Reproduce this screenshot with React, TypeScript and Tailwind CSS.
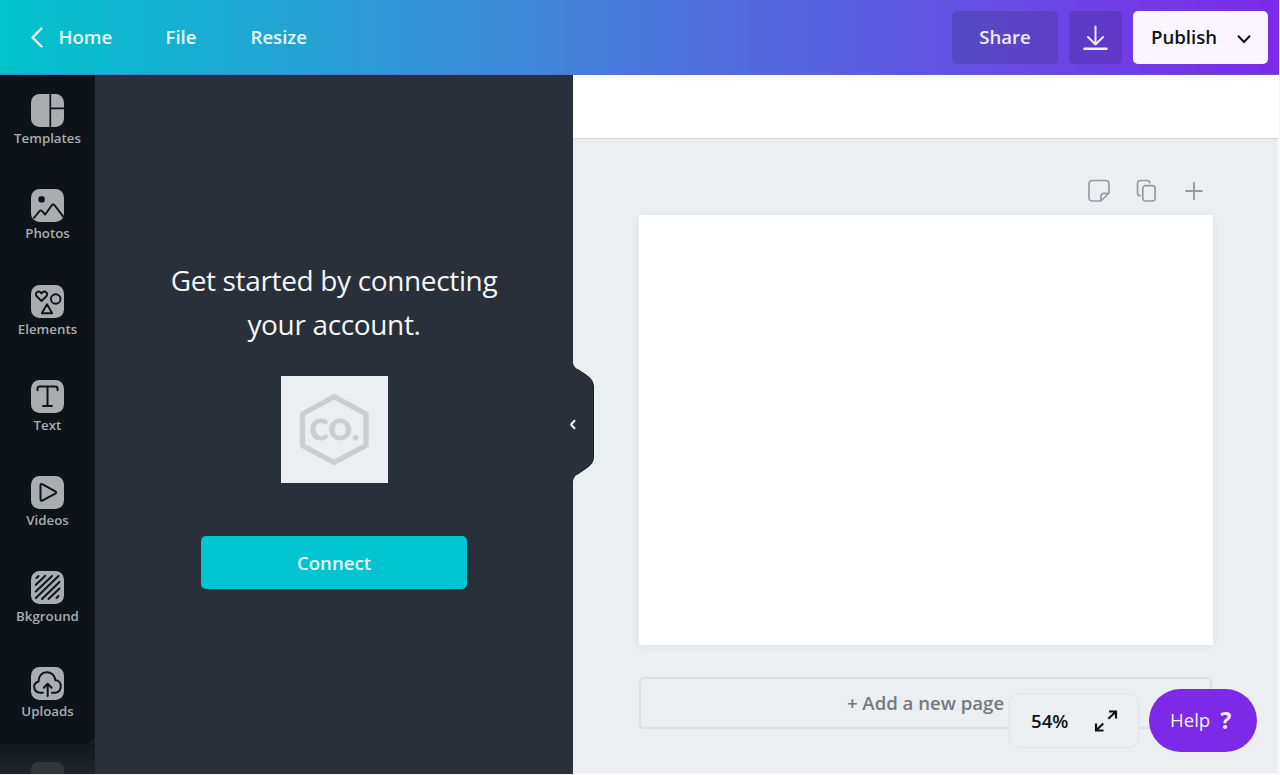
import type { ReactNode } from "react";

const DARK = "#0e1319";

function TemplatesGlyph() {
  return <path d="M19.3 0v33M19.3 14.3H33" fill="none" stroke={DARK} strokeWidth="1.7" />;
}

function PhotosGlyph() {
  return (
    <>
      <rect x="7.5" y="7.3" width="6.2" height="6.2" rx="2" fill={DARK} />
      <path d="M2.500 29.500l6-7.400q1.300-1.500 2.600 0l3.100 3.400 6.400-9q1.600-2 3.200 0L32.500 28" fill="none" stroke={DARK} strokeWidth="1.900" strokeLinejoin="round" />
    </>
  );
}

function ElementsGlyph() {
  return (
    <g fill="none" stroke={DARK} strokeWidth="1.9" strokeLinejoin="round">
      <path d="M10.500 16l-4.600-4.500C2.800 8 7.500 4.500 10.500 8.300 13.500 4.500 18.200 8 15.100 11.500z" />
      <circle cx="24.700" cy="14" r="4.800" />
      <path d="M16 19.300l5.200 9H10.800z" />
    </g>
  );
}

function TextGlyph() {
  return (
    <path
      d="M6.500 10.300V8.500q0-1.900 2-1.900h16q2 0 2 1.900v1.800M16.500 7v19M12 26h9"
      fill="none"
      stroke={DARK}
      strokeWidth="2"
      strokeLinecap="round"
    />
  );
}

function VideosGlyph() {
  return (
    <path
      d="M9.500 9.500v13.600q0 2.300 2.200 1.200l12.600-6.600q1.700-1.200 0-2.400L11.700 8.300q-2.200-1.100-2.200 1.200z"
      fill="none"
      stroke={DARK}
      strokeWidth="2"
      strokeLinejoin="round"
    />
  );
}

function BackgroundGlyph() {
  return (
    <path
      d="M5.500 7l2-2M4.800 13.800L14.300 4.800M4.800 20.500L21 5M4.800 27L27.500 5M11 28L28.500 11M17.500 28L28.500 17.500M25.500 27l2-2"
      fill="none"
      stroke={DARK}
      strokeWidth="2"
      strokeLinecap="round"
    />
  );
}

function UploadsGlyph() {
  return (
    <g fill="none" stroke={DARK} strokeWidth="2" strokeLinecap="round" strokeLinejoin="round">
      <path d="M12 25.800H9.300C1.500 25 1.500 16 7.500 14.500 7.500 2.500 23 2 24.500 13.300 31.500 13.500 31.500 25 24.500 25.800H21" />
      <path d="M16.700 29V17M12.800 20.800l3.900-4 3.900 4" />
    </g>
  );
}

const tools: { label: string; glyph: ReactNode }[] = [
  { label: "Templates", glyph: <TemplatesGlyph /> },
  { label: "Photos", glyph: <PhotosGlyph /> },
  { label: "Elements", glyph: <ElementsGlyph /> },
  { label: "Text", glyph: <TextGlyph /> },
  { label: "Videos", glyph: <VideosGlyph /> },
  { label: "Bkground", glyph: <BackgroundGlyph /> },
  { label: "Uploads", glyph: <UploadsGlyph /> },
];

function Header() {
  return (
    <header className="flex h-[75px] shrink-0 items-start justify-between border-b border-[#4c70c8]/60 bg-[linear-gradient(90deg,#00c4cc,#3f8ad9_40%,#4a78dc_50%,#5f59e2_70%,#7d2ae8)] pr-[11px] pl-[29px] text-[18.600px] font-semibold text-white/90">
      <nav className="flex h-[73px] items-center">
        <a className="flex items-center gap-[14.500px]">
          <svg width="15" height="22" viewBox="0 0 15 22" className="translate-y-px" fill="none" stroke="currentColor" strokeWidth="2.400" strokeLinecap="round" strokeLinejoin="round">
            <path d="M12.500 2.500L3.500 11.500l9 9" />
          </svg>
          <span className="w-[107px]">Home</span>
        </a>
        <a className="w-[85px]">File</a>
        <a>Resize</a>
      </nav>
      <div className="flex gap-[11px] pt-[11px]">
        <button className="h-[53px] w-[106px] rounded-[5px] bg-[#3a3580]/30 pb-[2px]">Share</button>
        <button className="flex h-[53px] w-[53px] items-center justify-center rounded-[5px] bg-[#3a2a80]/30">
          <svg width="26" height="26" viewBox="0 0 26 26" className="-translate-x-px" fill="none" stroke="currentColor" strokeWidth="2" strokeLinecap="round" strokeLinejoin="round">
            <path d="M13.500 1.500v18M6 12l7.500 7.500 7.500-7.500" />
            <path d="M2.500 23.700h22" strokeWidth="2.500" />
          </svg>
        </button>
        <button className="flex h-[53px] w-[135px] items-center justify-between rounded-[5px] bg-[#faf5fe] pr-[16px] pb-[2px] pl-[18px] text-[#0e1318]">
          Publish
          <svg width="16" height="10" viewBox="0 0 16 10" className="translate-y-[2px]" fill="none" stroke="currentColor" strokeWidth="2" strokeLinecap="round" strokeLinejoin="round">
            <path d="M2.500 2.300L8 8l5.500-5.700" />
          </svg>
        </button>
      </div>
    </header>
  );
}

function Sidebar() {
  return (
    <aside className="flex w-[95px] shrink-0 flex-col overflow-hidden bg-[#20252e]">
      <div className="shrink-0 bg-[#1a1f27]">
        <div className="flex h-[669px] flex-col rounded-br-[10px] bg-[#0e1319] pt-[18.500px]">
          {tools.map((tool) => (
            <div key={tool.label} className="flex h-[95.600px] shrink-0 flex-col items-center">
              <svg width="33" height="33" viewBox="0 0 33 33" className="shrink-0">
                <rect width="33" height="33" rx="8.500" fill="#a9adb0" />
                {tool.glyph}
              </svg>
              <span className="mt-[1.400px] text-[13.300px] leading-5 font-semibold text-[#a9adb0]">{tool.label}</span>
            </div>
          ))}
        </div>
      </div>
      <div className="flex h-[30px] shrink-0 justify-center bg-linear-to-b from-[#14191f] to-[#20252e] pt-[18px]">
        <div className="h-3 w-[33px] rounded-t-[7px] bg-[#323638]" />
      </div>
    </aside>
  );
}

function ConnectPanel() {
  return (
    <section className="relative flex w-[478px] shrink-0 flex-col items-center bg-[#293039] pt-[183px]">
      <h1 className="text-center text-[28px] leading-[44px] tracking-[-0.350px] text-[#f5f6f7]">
        Get started by connecting
        <br />
        your account.
      </h1>
      <svg width="107" height="107" viewBox="0 0 107 107" className="mt-[30px]">
        <rect width="107" height="107" fill="#ebeff2" />
        <path d="M53 20.700L85 38v31.500L53 86.500 21.500 69.500V38z" fill="none" stroke="#caced0" strokeWidth="5.300" strokeLinejoin="round" />
        <text x="28.800" y="64" fontFamily="Lato" fontWeight="900" fontSize="28" fill="#caced0" stroke="#caced0" strokeWidth=".9" textLength="49">
          CO.
        </text>
      </svg>
      <button className="mt-[53px] h-[53px] w-[266px] rounded-[5px] bg-[#00c4cf] text-[18.600px] font-semibold text-white/90">Connect</button>
      <svg width="24" height="124" viewBox="0 0 24 124" className="absolute top-[286px] left-[476px] z-10">
        <path d="M0 0H1.700C2 4 3.500 6 6 8L15.500 14.300Q22.500 19 22.500 26V96Q22.500 102.500 15.500 107L6 113.500C3.500 115.500 2 118 1.700 122H0z" fill="#293039" />
        <path d="M6 8L15.500 14.300Q22.500 19 22.500 26V96Q22.500 102.500 15.500 107L6 113.500" fill="none" stroke="#151b27" strokeWidth="1" />
      </svg>
      <svg width="8" height="12" viewBox="0 0 8 12" className="absolute top-[343px] left-[474px] z-20" fill="none" stroke="#f5f6f8" strokeWidth="2" strokeLinecap="round" strokeLinejoin="round">
        <path d="M5.500 2.700L2 6.500l3.500 3.800" />
      </svg>
    </section>
  );
}

function PageTools() {
  return (
    <div className="flex items-center gap-[24px] pr-[8px] text-[#969b9f]">
      <svg width="24" height="24" viewBox="0 0 24 24" fill="none" stroke="currentColor" strokeWidth="1.700" strokeLinejoin="round">
        <path d="M14 22H5.500Q2 22 2 18.500V5q0-3.500 3.500-3.500h13Q22 1.500 22 5v9z" />
        <path d="M14 22v-4.700q0-3 3-3h5" />
      </svg>
      <svg width="24" height="24" viewBox="0 0 24 24" fill="none" stroke="currentColor" strokeWidth="1.700" strokeLinecap="round">
        <path d="M5 16.700Q2.500 16.700 2.500 13.700V4.500q0-3 3-3h6.300q2.500 0 3 2.200" />
        <rect x="7.800" y="6.700" width="12.300" height="15.300" rx="2.700" />
      </svg>
      <svg width="22" height="24" viewBox="0 0 22 24" fill="none" stroke="currentColor" strokeWidth="1.900" strokeLinecap="round">
        <path d="M11 4v16M3 12h16" />
      </svg>
    </div>
  );
}

function Workspace() {
  return (
    <main className="relative flex grow flex-col border-r border-b border-white bg-[#ebeff2]">
      <div className="h-16 shrink-0 border-b border-[#cfd4d7] bg-white" />
      <div className="flex w-[640px] flex-col pl-[66px]">
        <div className="flex h-[76px] items-end justify-end pb-[12px]">
          <PageTools />
        </div>
        <div className="h-[430px] w-[574px] bg-white shadow-[0_2px_8px_rgba(14,19,24,0.06)]" />
        <div className="mt-[32px] flex h-[52px] w-[573px] items-center justify-center rounded-[5px] border-2 border-[#dce0e3] text-[18.600px] font-semibold text-[#74797d]">
          + Add a new page
        </div>
      </div>
      <div className="absolute right-[21px] bottom-[21px] flex items-center gap-[10px]">
        <div className="flex h-[55px] w-[130px] items-center justify-between rounded-[10px] border border-[#dfe3e5] bg-[#ecf0f2] pr-[19px] pl-[21px] text-[18.600px] font-semibold text-[#0e1318]">
          54%
          <svg width="26" height="24" viewBox="0 0 26 24" fill="none" stroke="currentColor" strokeWidth="2.200">
            <path d="M15.300 9.700L22.500 3M16 2.500H23V9.500M10.300 14.500L3.500 21M3 14.500V21.500H10.500" />
          </svg>
        </div>
        <button className="flex h-[63px] w-[108px] items-center gap-[10px] rounded-full bg-[#7d2ae8] pb-px pl-[21px] text-[18.600px] text-white/95">
          Help <span className="font-['Noto_Sans'] text-[23px] font-bold">?</span>
        </button>
      </div>
    </main>
  );
}

export default function App() {
  return (
    <div className="flex h-[775px] w-[1280px] flex-col overflow-hidden border-r border-b border-[#f4f4f8] bg-[#ebeff2] font-['Open_Sans',sans-serif]">
      <Header />
      <div className="flex min-h-0 grow">
        <Sidebar />
        <ConnectPanel />
        <Workspace />
      </div>
    </div>
  );
}
